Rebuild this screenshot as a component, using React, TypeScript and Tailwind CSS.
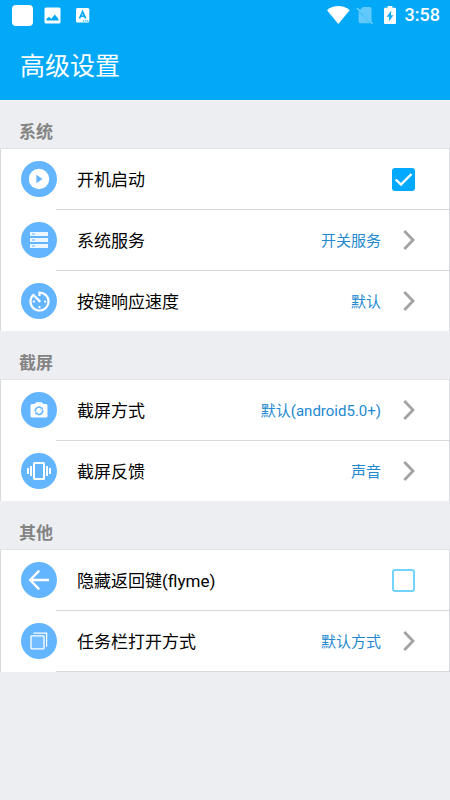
import { ReactNode, useState } from "react";
import { MdAvTimer, MdVibration } from "react-icons/md";

/* Status bar */
function StatusBar() {
  return (
    <div className="flex h-[30px] items-center justify-between pl-3 pr-[10px]">
      <div className="flex items-center">
        <span className="h-[21px] w-[21px] rounded-[4px] bg-white" />
        <svg className="ml-[11px]" width="17" height="17" viewBox="0 0 17 17">
          <rect x="0.5" y="0.5" width="16" height="16" rx="1.5" fill="#fff" />
          <path d="M2.5 13.5 V11.8 L5 9.8 L7.2 12 L10.8 7.5 L14.5 12 V13.5 Z" fill="#03a9f7" />
        </svg>
        <svg className="ml-[15px]" width="14" height="15" viewBox="0 0 14 15">
          <rect x="0" y="0" width="13.3" height="14.5" rx="1.5" fill="#fff" />
          <path d="M3.5 10.5 L6.6 3.5 L9.7 10.5 M4.6 8.2 H8.6" fill="none" stroke="#03a9f7" strokeWidth="1.7" />
          <path d="M7 12.8h1.2M9.2 12.8h1.2M11.2 12.8h1.2" stroke="#03a9f7" strokeWidth="1.2" />
        </svg>
      </div>
      <div className="flex items-center text-white">
        <svg width="23" height="18" viewBox="0 0 23 18">
          <path d="M11.3 18 L0 4.2 Q5 0 11.3 0 T22.7 4.2 Z" fill="#fff" />
        </svg>
        <svg className="ml-[6px]" width="18" height="18" viewBox="0 0 18 18">
          <path d="M6.8 1 H14 Q15.5 1 15.5 2.5 V15.4 L4 3.8 Z M2.6 5.2 L14.6 17.2 H4 Q2.6 17.2 2.6 15.6 Z" fill="#fff" opacity="0.38" />
          <path d="M1 2 L16.6 17.6" stroke="#fff" strokeWidth="1.3" opacity="0.5" />
        </svg>
        <svg className="ml-[10px]" width="12" height="18" viewBox="0 0 12 18">
          <path d="M3.6 0 H8.4 V1.8 H11 Q12 1.8 12 2.8 V17 Q12 18 11 18 H1 Q0 18 0 17 V2.8 Q0 1.8 1 1.8 H3.6 Z" fill="#fff" />
          <path d="M7.4 4.6 L2.6 10.8 H5.3 L4.7 15.4 L9.5 9.2 H6.8 Z" fill="#03a9f7" />
        </svg>
        <span className="ml-[9px] text-[18px] font-medium leading-[22px]">3:58</span>
      </div>
    </div>
  );
}

/* Row icons */
const PlayIcon = () => (
  <svg width="22" height="22" viewBox="0 0 22 22">
    <circle cx="11" cy="11" r="10.2" fill="#fff" />
    <path d="M8.4 6.8 L14.4 11 L8.4 15.2 Z" fill="#64b5ff" />
  </svg>
);

const ServerIcon = () => (
  <svg width="18" height="16" viewBox="0 0 18 16">
    {[0, 6, 12].map((y) => (
      <g key={y}>
        <rect x="0" y={y} width="18" height="4" fill="#fff" opacity="0.88" />
        <rect x="2" y={y + 1.5} width="3" height="1" fill="#64b5ff" />
      </g>
    ))}
  </svg>
);

const CameraIcon = () => (
  <svg width="18" height="16" viewBox="0 0 18 16">
    <path d="M2 2 H4.5 L6.3 0.3 H11.7 L13.5 2 H16 Q17.5 2 17.5 3.5 V14 Q17.5 15.6 16 15.6 H2 Q0.5 15.6 0.5 14 V3.5 Q0.5 2 2 2 Z" fill="#fff" />
    <path d="M5.4 9.6 A3.7 3.7 0 0 1 11.4 6 M12.6 8 A3.7 3.7 0 0 1 6.6 11.6" fill="none" stroke="#64b5ff" strokeWidth="1.6" />
    <path d="M12.9 4.9 V7.4 H10 Z M5.1 12.7 V10.2 H8 Z" fill="#64b5ff" />
  </svg>
);

const BackIcon = () => (
  <svg width="22" height="22" viewBox="0 0 22 22">
    <path d="M11.2 1.7 L2.2 11 L11.2 20.3 M2.5 11 H21" fill="none" stroke="#fff" strokeWidth="2.4" />
  </svg>
);

const WindowsIcon = () => (
  <svg width="18" height="18" viewBox="0 0 18 18" fill="none" stroke="#fff" strokeWidth="1.3">
    <path d="M3.5 1.2 H16.6 V14.8" />
    <rect x="1" y="3.8" width="13" height="13" rx="0.5" fill="#fff" fillOpacity="0.1" />
  </svg>
);

const Chevron = () => (
  <svg width="12" height="20" viewBox="0 0 12 20" className="ml-[22px] shrink-0">
    <path d="M1.3 1 L10 10 L1.3 19" fill="none" stroke="#a3a3a3" strokeWidth="2.8" />
  </svg>
);

const rowClass = "flex h-[60px] w-full items-center pl-5 pr-[34px] text-left";

function RowLabel({ icon, title }: { icon: ReactNode; title: string }) {
  return (
    <>
      <span className="flex h-9 w-9 shrink-0 items-center justify-center rounded-full bg-[#64b5ff] text-white">{icon}</span>
      <span className="ml-5 flex-1 pt-[2px] text-[17px] leading-6 text-black">{title}</span>
    </>
  );
}

function LinkRow({ icon, title, value }: { icon: ReactNode; title: string; value: string }) {
  return (
    <button type="button" className={rowClass}>
      <RowLabel icon={icon} title={title} />
      <span className="pt-[2px] text-[15px] leading-6 text-[#2389cf]">{value}</span>
      <Chevron />
    </button>
  );
}

function CheckRow({ icon, title, initial }: { icon: ReactNode; title: string; initial: boolean }) {
  const [checked, setChecked] = useState(initial);
  return (
    <label className={rowClass}>
      <RowLabel icon={icon} title={title} />
      <span className="grid h-[23px] w-[23px] shrink-0">
        <input
          type="checkbox"
          checked={checked}
          onChange={(e) => setChecked(e.target.checked)}
          className="col-start-1 row-start-1 h-[23px] w-[23px] appearance-none rounded-[3px] border-2 border-[#74d3ff] bg-white checked:border-[#03a9ff] checked:bg-[#03a9ff]"
        />
        {checked && (
          <svg viewBox="0 0 23 23" className="pointer-events-none col-start-1 row-start-1 h-[23px] w-[23px]">
            <path d="M3.7 11.5 L9 16.6 L19.5 6" fill="none" stroke="#fff" strokeWidth="2.4" />
          </svg>
        )}
      </span>
    </label>
  );
}

const Divider = () => <div className="ml-[55px] h-px bg-[#d6d7db]" />;

function Section({ title, children }: { title: string; children: ReactNode }) {
  return (
    <section>
      <h2 className="flex h-12 items-end px-[19px] pb-1 text-[17px] font-bold leading-6 text-[#848484]">{title}</h2>
      <div className="border-x border-t border-x-[#d9dade] border-t-[#e3e4e8] bg-white">{children}</div>
    </section>
  );
}

export default function App() {
  return (
    <div className="min-h-screen bg-[#edeef2] font-['Roboto','Noto_Sans_CJK_SC',sans-serif]">
      <header className="bg-[#03a9f7] shadow-[0_1px_0_#f6f2ec]">
        <StatusBar />
        <h1 className="flex h-[70px] items-center px-5 pt-1 text-[25px] leading-8 text-white">高级设置</h1>
      </header>
      <main>
        <Section title="系统">
          <CheckRow icon={<PlayIcon />} title="开机启动" initial={true} />
          <Divider />
          <LinkRow icon={<ServerIcon />} title="系统服务" value="开关服务" />
          <Divider />
          <LinkRow icon={<MdAvTimer className="h-[27px] w-[27px]" />} title="按键响应速度" value="默认" />
        </Section>
        <Section title="截屏">
          <LinkRow icon={<CameraIcon />} title="截屏方式" value="默认(android5.0+)" />
          <Divider />
          <LinkRow icon={<MdVibration className="h-6 w-6" />} title="截屏反馈" value="声音" />
        </Section>
        <Section title="其他">
          <CheckRow icon={<BackIcon />} title="隐藏返回键(flyme)" initial={false} />
          <Divider />
          <LinkRow icon={<WindowsIcon />} title="任务栏打开方式" value="默认方式" />
          <Divider />
        </Section>
      </main>
    </div>
  );
}
